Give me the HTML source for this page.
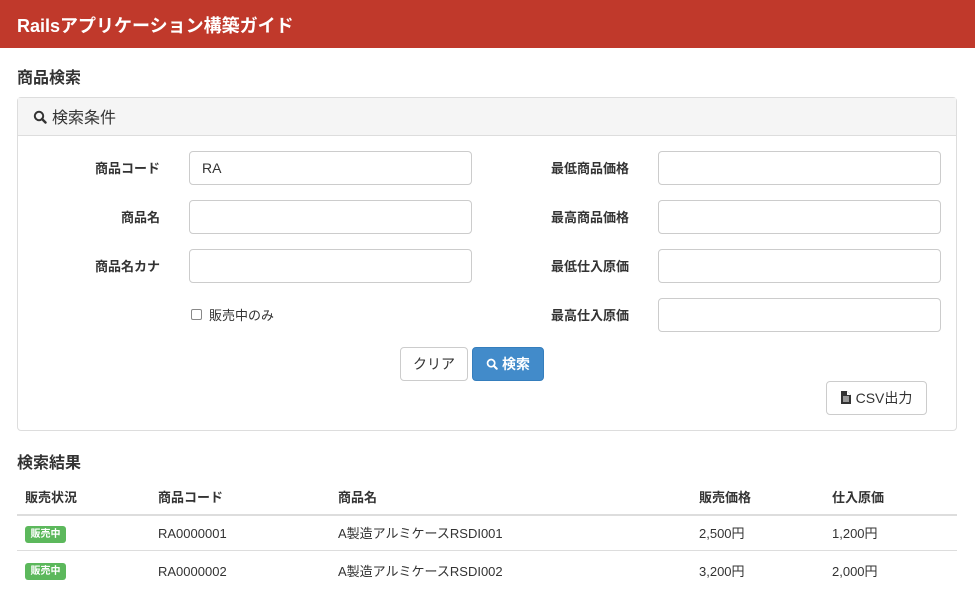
<!DOCTYPE html>
<html><head><meta charset="utf-8"><style>
*{box-sizing:border-box;margin:0;padding:0}
body{width:975px;height:615px;overflow:hidden;background:#fff;font-family:"Liberation Sans","Noto Sans CJK JP",sans-serif;color:#333;font-size:13px;line-height:18px;position:relative}
.a{position:absolute}
.hdr{left:0;top:0;width:975px;height:48px;background:#c0392b;color:#fff;font-size:18px;line-height:22px;font-weight:bold;padding:15px 0 0 17px}
h2{position:absolute;font-size:16px;line-height:20px;font-weight:bold}
.panel{left:17px;top:97px;width:940px;height:334px;border:1px solid #ddd;border-radius:4px}
.ph{left:0;top:0;width:938px;height:38px;background:#f5f5f5;border-bottom:1px solid #ddd;font-size:16px;line-height:20px;padding:11px 0 0 15px}
.lbl{font-weight:bold;font-size:13px;text-align:right;width:160px}
.inp{width:283px;height:34px;border:1px solid #ccc;border-radius:4px;font-size:14px;line-height:32px;padding:0 12px}
.btn{height:34px;border:1px solid #ccc;border-radius:4px;font-size:14px;line-height:33px;text-align:center;background:#fff}
.th{font-weight:bold;font-size:13px;top:489px}
.td{font-size:13px}
.bd{background:#5cb85c;color:#fff;font-size:10px;line-height:17px;font-weight:bold;border-radius:3px;width:41px;height:17px;text-align:center}
</style></head><body>
<div class="a hdr">Railsアプリケーション構築ガイド</div>
<h2 style="left:17px;top:69px">商品検索</h2>
<div class="a panel">
<div class="a ph"><svg width="14" height="14" viewBox="0 0 14 14" style="vertical-align:-1px;margin-right:5px"><circle cx="6" cy="6" r="4.2" fill="none" stroke="#333" stroke-width="2"/><path d="M9 9l3.5 3.5" stroke="#333" stroke-width="2.4" stroke-linecap="round"/></svg>検索条件</div>
</div>
<div class="a lbl" style="left:0;top:160px">商品コード</div>
<div class="a lbl" style="left:0;top:209px">商品名</div>
<div class="a lbl" style="left:0;top:258px">商品名カナ</div>
<div class="a inp" style="left:189px;top:151px">RA</div>
<div class="a inp" style="left:189px;top:200px"></div>
<div class="a inp" style="left:189px;top:249px"></div>
<div class="a" style="left:191px;top:309px;width:11px;height:11px;border:1px solid #888;border-radius:2px"></div>
<div class="a" style="left:209px;top:307px;font-size:13px">販売中のみ</div>
<div class="a lbl" style="left:469px;top:160px">最低商品価格</div>
<div class="a lbl" style="left:469px;top:209px">最高商品価格</div>
<div class="a lbl" style="left:469px;top:258px">最低仕入原価</div>
<div class="a lbl" style="left:469px;top:307px">最高仕入原価</div>
<div class="a inp" style="left:658px;top:151px"></div>
<div class="a inp" style="left:658px;top:200px"></div>
<div class="a inp" style="left:658px;top:249px"></div>
<div class="a inp" style="left:658px;top:298px"></div>
<div class="a btn" style="left:400px;top:347px;width:68px">クリア</div>
<div class="a btn" style="left:472px;top:347px;width:72px;background:#428bca;border-color:#357ebd;color:#fff;font-weight:bold"><svg width="12" height="12" viewBox="0 0 14 14" style="vertical-align:-1px;margin-right:4px"><circle cx="6" cy="6" r="4.2" fill="none" stroke="#fff" stroke-width="2"/><path d="M9 9l3.5 3.5" stroke="#fff" stroke-width="2.4" stroke-linecap="round"/></svg>検索</div>
<div class="a btn" style="left:826px;top:381px;width:101px"><svg width="10" height="13" viewBox="0 0 10 13" style="vertical-align:-1px;margin-right:5px"><path d="M0 0h6l4 4v9H0z" fill="#333"/><path d="M6 0v4h4" fill="#fff"/><path d="M2 6h6M2 8h6M2 10h6" stroke="#fff" stroke-width="1"/></svg>CSV出力</div>
<h2 style="left:17px;top:454px">検索結果</h2>
<div class="a th" style="left:25px">販売状況</div>
<div class="a th" style="left:158px">商品コード</div>
<div class="a th" style="left:338px">商品名</div>
<div class="a th" style="left:699px">販売価格</div>
<div class="a th" style="left:832px">仕入原価</div>
<div class="a" style="left:17px;top:514px;width:940px;height:2px;background:#ddd"></div>
<div class="a bd" style="left:25px;top:526px">販売中</div>
<div class="a td" style="left:158px;top:525px">RA0000001</div>
<div class="a td" style="left:338px;top:525px">A製造アルミケースRSDI001</div>
<div class="a td" style="left:699px;top:525px">2,500円</div>
<div class="a td" style="left:832px;top:525px">1,200円</div>
<div class="a" style="left:17px;top:550px;width:940px;height:1px;background:#ddd"></div>
<div class="a bd" style="left:25px;top:563px">販売中</div>
<div class="a td" style="left:158px;top:563px">RA0000002</div>
<div class="a td" style="left:338px;top:563px">A製造アルミケースRSDI002</div>
<div class="a td" style="left:699px;top:563px">3,200円</div>
<div class="a td" style="left:832px;top:563px">2,000円</div>
</body></html>
